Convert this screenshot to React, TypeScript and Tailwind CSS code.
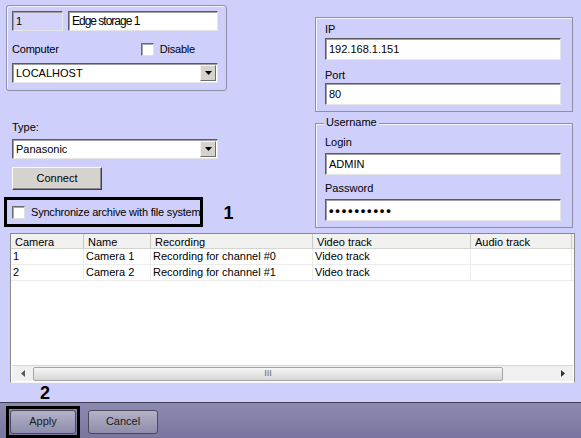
import React from 'react';

const font = { fontFamily: '"Liberation Sans", Arial, sans-serif' };

/** Classic sunken edit field. */
function Field({ className = '', children }: { className?: string; children?: React.ReactNode }) {
  return (
    <div
      className={`flex items-center border border-t-[#5a5a5a] border-l-[#5a5a5a] border-b-[#e6e6e6] border-r-[#e6e6e6] shadow-[inset_1px_1px_0_#a0a0a0] pl-[3px] text-[11px] leading-none text-black overflow-hidden whitespace-nowrap ${className}`}
    >
      {children}
    </div>
  );
}

function Combo({ value, className = '' }: { value: string; className?: string }) {
  return (
    <Field className={`bg-white pr-[1px] ${className}`}>
      <span className="flex-1">{value}</span>
      <span className="w-[16px] h-[16px] grid place-items-center bg-[#d6d3ce] border border-t-[#f4f4f4] border-l-[#f4f4f4] border-b-[#6e6e6e] border-r-[#6e6e6e]">
        <svg width="7" height="4" viewBox="0 0 7 4">
          <path d="M0 0h7L3.5 4z" fill="#000" />
        </svg>
      </span>
    </Field>
  );
}

function Check() {
  return (
    <span className="w-[13px] h-[13px] bg-white border border-t-[#6a6a6a] border-l-[#6a6a6a] border-b-[#e0e0e0] border-r-[#e0e0e0] shadow-[inset_1px_1px_0_#a8a8a8] shrink-0" />
  );
}

const cols = [
  { name: 'Camera', w: 'w-[73px]' },
  { name: 'Name', w: 'w-[67px]' },
  { name: 'Recording', w: 'w-[162px]' },
  { name: 'Video track', w: 'w-[158px]' },
  { name: 'Audio track', w: 'w-[101px]' },
];

const rows = [
  ['1', 'Camera 1', 'Recording for channel #0', 'Video track', ''],
  ['2', 'Camera 2', 'Recording for channel #1', 'Video track', ''],
];

export default function App() {
  return (
    <div className="w-[581px] h-[438px] flex flex-col bg-[#cfcffb] overflow-hidden text-black" style={font}>
      <div className="flex-1 flex flex-col">
        <div className="flex">
          {/* Left column */}
          <div className="ml-[6px] mt-[5px] w-[221px] flex flex-col">
            <div className="border border-[#8e8ea6] rounded-[3px] shadow-[inset_1px_1px_0_#f4f4ff] px-[5px] pt-[5px] pb-[7px]">
              <div className="flex gap-[5px]">
                <Field className="w-[51px] h-[20px] bg-[#d3d3fc]">1</Field>
                <Field className="w-[150px] h-[20px] bg-white text-[12px] tracking-[-1px]">Edge storage 1</Field>
              </div>
              <div className="flex items-center h-[16px] mt-[10px] text-[11px] tracking-[-0.2px]">
                <span className="flex-1">Computer</span>
                <Check />
                <span className="ml-[6px] mr-[26px]">Disable</span>
              </div>
              <Combo value="LOCALHOST" className="w-[206px] h-[20px] mt-[6px]" />
            </div>

            <div className="ml-[6px] mt-[31px] text-[11px] leading-none">Type:</div>
            <Combo value="Panasonic" className="ml-[6px] w-[206px] h-[20px] mt-[6px]" />
            <div className="ml-[6px] mt-[8px] w-[90px] h-[23px] grid place-items-center text-[11px] bg-[#d6d3ce] border border-t-[#fafafa] border-l-[#fafafa] border-b-[#404040] border-r-[#404040] shadow-[inset_-1px_-1px_0_#8a8a8a]">
              Connect
            </div>
            <div className="flex items-center mt-[7px] -ml-[2px]">
              <div className="w-[207px] h-[30px] border-[3px] border-black flex items-center pl-[5px] gap-[6px] text-[11px] tracking-[-0.2px] whitespace-nowrap">
                <Check />
                <span>Synchronize archive with file system</span>
              </div>
              <span className="ml-[20px] mt-[2px] text-[18px] font-bold leading-none">1</span>
            </div>
          </div>

          {/* Right column */}
          <div className="ml-auto mr-[8px] w-[258px] flex flex-col">
            <div className="mt-[17px] h-[95px] border border-[#8e8ea6] shadow-[inset_1px_1px_0_#f4f4ff] px-[9px] pt-[3px] text-[11px]">
              <div className="h-[16px] flex items-center">IP</div>
              <Field className="w-[236px] h-[22px] bg-white mt-[1px]">192.168.1.151</Field>
              <div className="h-[16px] flex items-center mt-[7px]">Port</div>
              <Field className="w-[236px] h-[22px] bg-white">80</Field>
            </div>
            <div className="relative mt-[11px] h-[105px] border border-[#8e8ea6] shadow-[inset_1px_1px_0_#f4f4ff] px-[9px] pt-[10px] text-[11px]">
              <span className="absolute -top-[7px] left-[8px] px-[2px] bg-[#cfcffb] leading-none">Username</span>
              <div className="h-[16px] flex items-center">Login</div>
              <Field className="w-[236px] h-[22px] bg-white mt-[3px]">ADMIN</Field>
              <div className="h-[16px] flex items-center mt-[5px]">Password</div>
              <Field className="w-[236px] h-[22px] bg-white mt-[3px]">
                <span className="text-[13px] tracking-[1.8px] font-bold">••••••••••</span>
              </Field>
            </div>
          </div>
        </div>

        {/* Camera table */}
        <div className="ml-[10px] mt-[5px] w-[565px] h-[150px] flex flex-col bg-white border border-t-[#8a8a8a] border-l-[#8a8a8a] border-b-[#f4f4f4] border-r-[#8a8a8a] text-[11px] leading-none">
          <div className="flex h-[15px] bg-[#f1f1ef] border-b border-[#d5d5d0] shrink-0">
            {cols.map((c) => (
              <div key={c.name} className={`${c.w} flex items-center pl-[4px] pt-[2px] border-r border-[#c8c8c4] shrink-0`}>
                {c.name}
              </div>
            ))}
          </div>
          {rows.map((r) => (
            <div key={r[0]} className="flex h-[16px] border-b border-[#ececec] shrink-0">
              {r.map((v, i) => (
                <div key={i} className={`${cols[i].w} flex items-center pl-[2px] border-r border-[#ececec] shrink-0`}>
                  {v}
                </div>
              ))}
            </div>
          ))}
          <div className="flex-1" />
          <div className="h-[16px] mx-[1px] mb-[1px] flex items-center bg-[#f0f0f0] border-t border-[#d8d8d8] shrink-0">
            <span className="w-[21px] grid place-items-center">
              <svg width="4" height="7" viewBox="0 0 4 7">
                <path d="M4 0v7L0 3.5z" fill="#555" />
              </svg>
            </span>
            <div className="w-[470px] h-[14px] rounded-[2px] border border-[#a4a4a4] bg-gradient-to-b from-[#f6f6f6] to-[#d6d6d6] grid place-items-center">
              <span className="text-[9px] text-[#666]">III</span>
            </div>
            <div className="flex-1" />
            <span className="w-[21px] grid place-items-center">
              <svg width="4" height="7" viewBox="0 0 4 7">
                <path d="M0 0v7L4 3.5z" fill="#333" />
              </svg>
            </span>
          </div>
        </div>
        <div className="ml-[40px] mt-[1px] text-[18px] font-bold leading-none">2</div>
      </div>

      {/* Bottom bar */}
      <div className="h-[38px] shrink-0 border-t border-[#3c3b52] bg-gradient-to-b from-[#8d8bb2] to-[#77759d] flex items-center pl-[6px] gap-[8px]">
        <div className="border-[3px] border-black p-[1px]">
          <div className="w-[66px] h-[24px] grid place-items-center rounded-[3px] border border-[#4a4a5a] bg-gradient-to-b from-[#b3b2c8] to-[#8e8dab] text-[11px] text-[#1a1a1a]">
            Apply
          </div>
        </div>
        <div className="w-[70px] h-[24px] grid place-items-center rounded-[3px] border border-[#4a4a5a] bg-gradient-to-b from-[#b3b2c8] to-[#8e8dab] text-[11px] text-[#1a1a1a]">
          Cancel
        </div>
      </div>
    </div>
  );
}
